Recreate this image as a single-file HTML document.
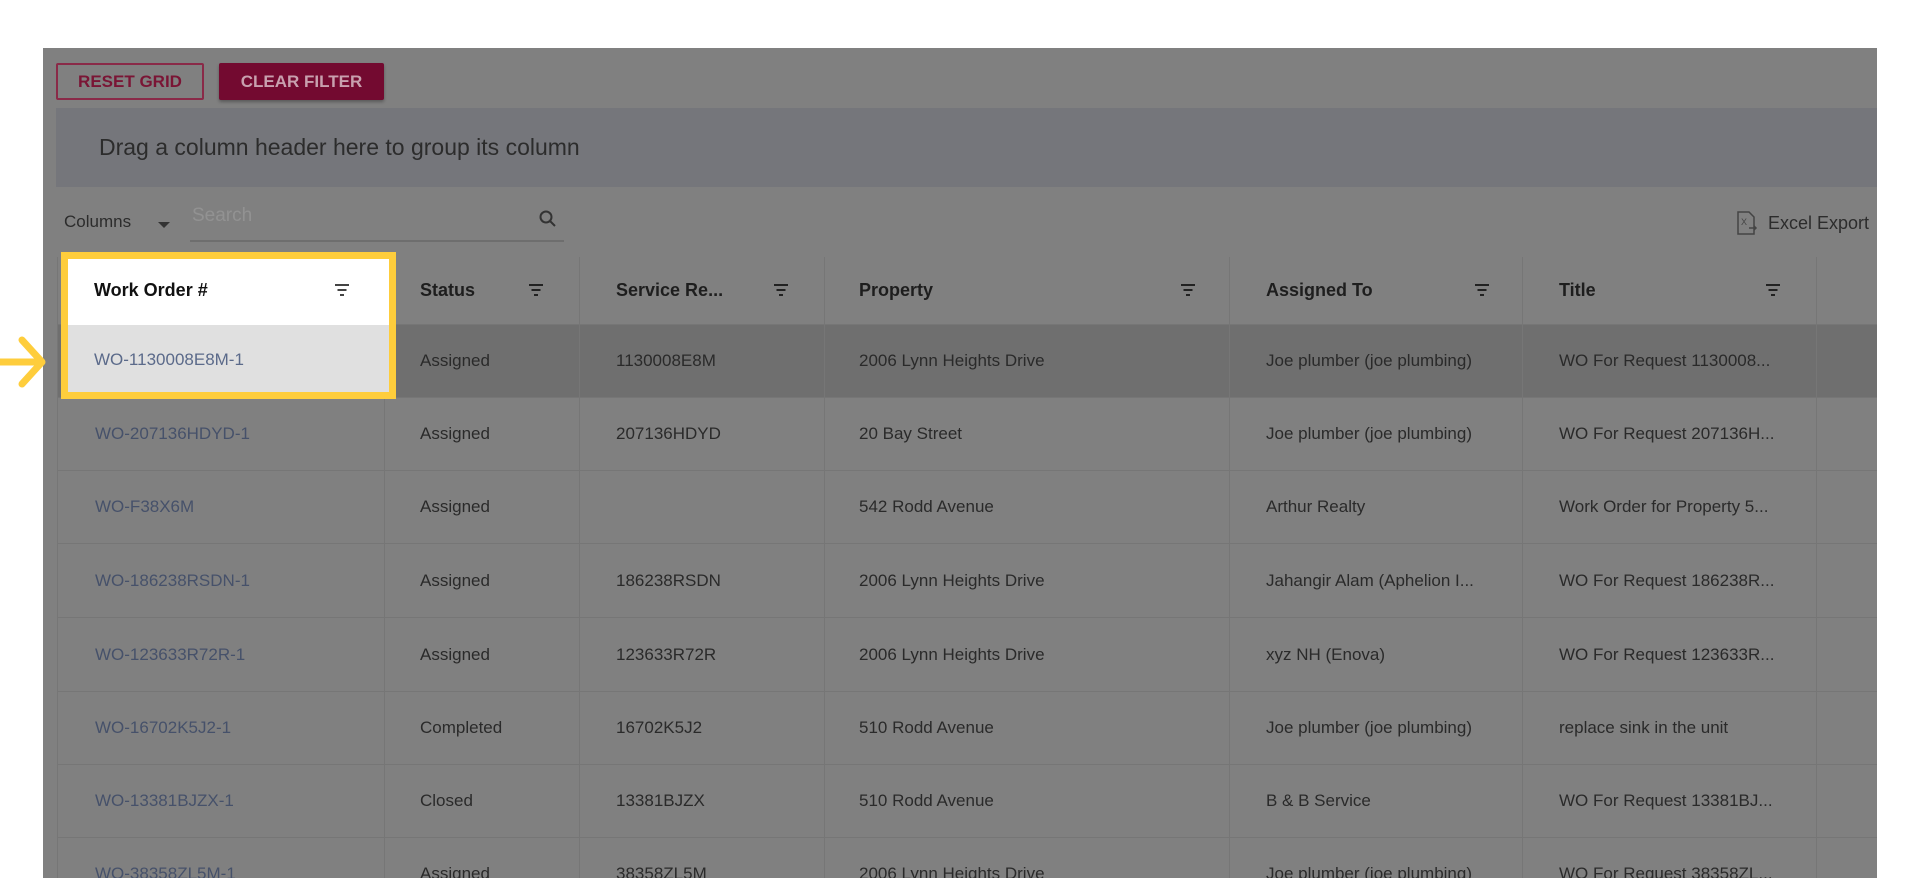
<!DOCTYPE html>
<html style="overflow:hidden;width:1920px;height:878px"><head><meta charset="utf-8"><style>
*{margin:0;padding:0;box-sizing:border-box}
body{width:1920px;height:878px;background:#fff;font-family:"Liberation Sans",Arial,sans-serif;position:relative;overflow:hidden}
.panel{position:absolute;left:43px;top:48px;width:1834px;height:830px;background:#808080}
.btn{position:absolute;top:63px;height:37px;font-size:17px;font-weight:bold;display:flex;align-items:center;justify-content:center;border-radius:2px}
.reset{left:56px;width:148px;border:2px solid #8a2a48;color:#7a1535}
.clear{left:219px;width:165px;background:#730a30;color:#c8a0ae;box-shadow:0 2px 3px rgba(0,0,0,.3)}
.group{position:absolute;left:56px;top:108px;width:1821px;height:79px;background:#75767b;color:#2c2c2c;font-size:23px;padding-left:43px;line-height:79px}
.cols{position:absolute;left:64px;top:212px;font-size:17px;color:#2c2c2c}
.caret{position:absolute;left:158px;top:222px;width:0;height:0;border-left:6px solid transparent;border-right:6px solid transparent;border-top:6px solid #333}
.search{position:absolute;left:190px;top:205px;width:374px;height:37px;border-bottom:2px solid #6e6e6e;color:#929292;font-size:19px;padding-left:2px}
.excel{position:absolute;right:51px;top:210px;font-size:18px;color:#2c2c2c;display:flex;align-items:center;gap:10px}
.grid{position:absolute;left:57px;top:257px;width:1820px;height:621px;border-left:1px solid #767676;overflow:hidden}
.row{position:absolute;left:0;width:1820px;height:73px;border-bottom:1px solid #767676}
.cell{position:absolute;top:0;height:100%;display:flex;align-items:center;font-size:17px;color:#2a2a2a;white-space:nowrap}
.hd .cell{font-weight:bold;font-size:18px;color:#1e1e1e}
.vl{position:absolute;top:257px;width:1px;height:621px;background:#767676}
.wo{color:#46516a}
.hl{position:absolute;left:61px;top:252px;width:335px;height:147px;border:7px solid #fecd3c}
</style></head><body>
<div class="panel"></div>
<div class="btn reset">RESET GRID</div>
<div class="btn clear">CLEAR FILTER</div>
<div class="group">Drag a column header here to group its column</div>
<div class="cols">Columns</div><div class="caret"></div>
<div class="search">Search
<svg style="position:absolute;right:6px;top:4px" width="20" height="20" viewBox="0 0 20 20"><circle cx="8" cy="8" r="5.5" fill="none" stroke="#333" stroke-width="2"/><path d="M12 12l5 5" stroke="#333" stroke-width="2"/></svg></div>
<div class="excel"><svg width="22" height="26" viewBox="0 0 22 26"><path d="M2 2h11l5 5v17H2z" fill="none" stroke="#444" stroke-width="1.5"/><text x="5" y="15" font-size="9" fill="#444" font-family="Liberation Sans">X</text><path d="M13 18h7m-2-2l2 2-2 2" stroke="#444" stroke-width="1.5" fill="none"/></svg>Excel Export</div>

<div class="grid">
<div class="row hd" style="top:0;height:68px">
<div class="cell" style="left:362px">Status</div>
<div class="cell" style="left:558px">Service Re...</div>
<div class="cell" style="left:801px">Property</div>
<div class="cell" style="left:1208px">Assigned To</div>
<div class="cell" style="left:1501px">Title</div>
</div>
<div class="row" style="top:68px;background:#6f6f6f"><div class="cell" style="left:362px">Assigned</div><div class="cell" style="left:558px">1130008E8M</div><div class="cell" style="left:801px">2006 Lynn Heights Drive</div><div class="cell" style="left:1208px">Joe plumber (joe plumbing)</div><div class="cell" style="left:1501px">WO For Request 1130008...</div></div>
<div class="row" style="top:141px"><div class="cell wo" style="left:37px">WO-207136HDYD-1</div><div class="cell" style="left:362px">Assigned</div><div class="cell" style="left:558px">207136HDYD</div><div class="cell" style="left:801px">20 Bay Street</div><div class="cell" style="left:1208px">Joe plumber (joe plumbing)</div><div class="cell" style="left:1501px">WO For Request 207136H...</div></div>
<div class="row" style="top:214px"><div class="cell wo" style="left:37px">WO-F38X6M</div><div class="cell" style="left:362px">Assigned</div><div class="cell" style="left:801px">542 Rodd Avenue</div><div class="cell" style="left:1208px">Arthur Realty</div><div class="cell" style="left:1501px">Work Order for Property 5...</div></div>
<div class="row" style="top:288px"><div class="cell wo" style="left:37px">WO-186238RSDN-1</div><div class="cell" style="left:362px">Assigned</div><div class="cell" style="left:558px">186238RSDN</div><div class="cell" style="left:801px">2006 Lynn Heights Drive</div><div class="cell" style="left:1208px">Jahangir Alam (Aphelion I...</div><div class="cell" style="left:1501px">WO For Request 186238R...</div></div>
<div class="row" style="top:362px"><div class="cell wo" style="left:37px">WO-123633R72R-1</div><div class="cell" style="left:362px">Assigned</div><div class="cell" style="left:558px">123633R72R</div><div class="cell" style="left:801px">2006 Lynn Heights Drive</div><div class="cell" style="left:1208px">xyz NH (Enova)</div><div class="cell" style="left:1501px">WO For Request 123633R...</div></div>
<div class="row" style="top:435px"><div class="cell wo" style="left:37px">WO-16702K5J2-1</div><div class="cell" style="left:362px">Completed</div><div class="cell" style="left:558px">16702K5J2</div><div class="cell" style="left:801px">510 Rodd Avenue</div><div class="cell" style="left:1208px">Joe plumber (joe plumbing)</div><div class="cell" style="left:1501px">replace sink in the unit</div></div>
<div class="row" style="top:508px"><div class="cell wo" style="left:37px">WO-13381BJZX-1</div><div class="cell" style="left:362px">Closed</div><div class="cell" style="left:558px">13381BJZX</div><div class="cell" style="left:801px">510 Rodd Avenue</div><div class="cell" style="left:1208px">B &amp; B Service</div><div class="cell" style="left:1501px">WO For Request 13381BJ...</div></div>
<div class="row" style="top:581px"><div class="cell wo" style="left:37px">WO-38358ZL5M-1</div><div class="cell" style="left:362px">Assigned</div><div class="cell" style="left:558px">38358ZL5M</div><div class="cell" style="left:801px">2006 Lynn Heights Drive</div><div class="cell" style="left:1208px">Joe plumber (joe plumbing)</div><div class="cell" style="left:1501px">WO For Request 38358ZL...</div></div>
</div>

<div class="vl" style="left:384px"></div><div class="vl" style="left:579px"></div><div class="vl" style="left:824px"></div><div class="vl" style="left:1229px"></div><div class="vl" style="left:1522px"></div><div class="vl" style="left:1816px"></div>

<svg style="position:absolute;left:0;top:0" width="1920" height="878">
<g stroke="#222" stroke-width="2">
<path d="M529 285h14M531.5 290h9M534 295h4"/><path d="M774 285h14M776.5 290h9M779 295h4"/><path d="M1181 285h14M1183.5 290h9M1186 295h4"/><path d="M1475 285h14M1477.5 290h9M1480 295h4"/><path d="M1766 285h14M1768.5 290h9M1771 295h4"/>
</g></svg>

<div style="position:absolute;left:68px;top:259px;width:321px;height:66px;background:#fff"></div>
<div style="position:absolute;left:68px;top:325px;width:321px;height:67px;background:#e0e0e0"></div>
<div style="position:absolute;left:94px;top:280px;font-size:18px;font-weight:bold;color:#111">Work Order #</div>
<svg style="position:absolute;left:334px;top:282px" width="16" height="16"><path d="M1 3h14M3.5 8h9M6 13h4" stroke="#444" stroke-width="2"/></svg>
<div style="position:absolute;left:94px;top:350px;font-size:17px;color:#5b6a8a">WO-1130008E8M-1</div>
<div class="hl"></div>
<svg style="position:absolute;left:0;top:335px" width="50" height="60"><path d="M0 27h40M22 5l20 22-20 22" fill="none" stroke="#fecd3c" stroke-width="7" stroke-linecap="round" stroke-linejoin="round"/></svg>
</body></html>
